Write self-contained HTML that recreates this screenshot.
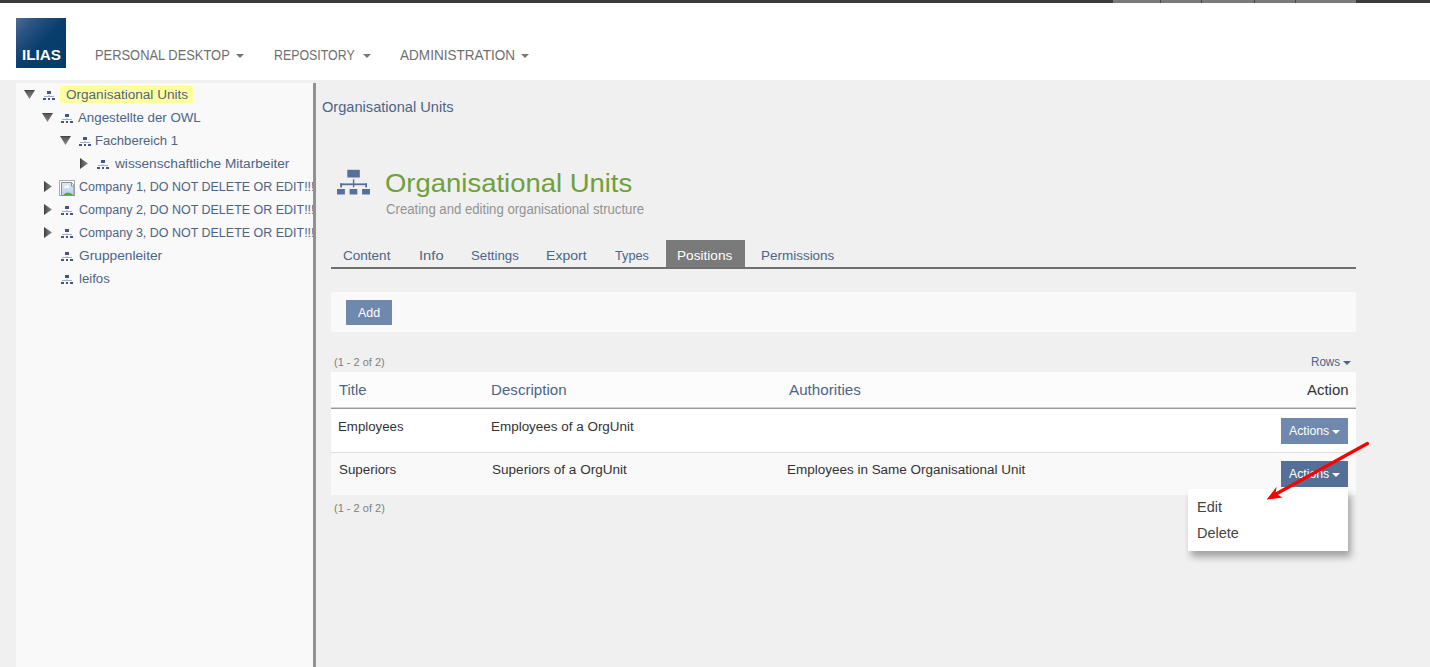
<!DOCTYPE html>
<html><head><meta charset="utf-8">
<style>
*{box-sizing:border-box;margin:0;padding:0}
html,body{width:1430px;height:667px;overflow:hidden;background:#f0f0f0;font-family:"Liberation Sans",sans-serif;position:relative}
.abs{position:absolute}
.tx{position:absolute;white-space:nowrap;transform-origin:0 0}
.caret{position:absolute;width:0;height:0;border-left:4px solid transparent;border-right:4px solid transparent;border-top:4px solid #777}
</style></head><body>
<div class="abs" style="left:0;top:0;width:1430px;height:3px;background:#3c3c3c"></div>
<div class="abs" style="left:1113px;top:0;width:243px;height:3px;background:#7a7a7a"></div>
<div class="abs" style="left:1160px;top:0;width:1px;height:3px;background:#444"></div>
<div class="abs" style="left:1201px;top:0;width:1px;height:3px;background:#444"></div>
<div class="abs" style="left:1254px;top:0;width:1px;height:3px;background:#444"></div>
<div class="abs" style="left:1295px;top:0;width:1px;height:3px;background:#444"></div>
<div class="abs" style="left:0;top:3px;width:1430px;height:77px;background:#fff"></div>
<div class="abs" style="left:16px;top:18px;width:50px;height:50px;background:linear-gradient(135deg,#4d6d93 0%,#2a5280 22%,#0a3f6d 50%,#033a68 100%)"></div>
<div class="caret" style="left:236px;top:54px;border-top-color:#777"></div>
<div class="caret" style="left:362.5px;top:54px;border-top-color:#777"></div>
<div class="caret" style="left:521px;top:54px;border-top-color:#777"></div>

<div class="abs" style="left:16px;top:83px;width:297px;height:584px;background:#f9f9f9"></div>
<div class="abs" style="left:313px;top:83px;width:3px;height:584px;background:#919191"></div>
<div class="abs" style="left:60px;top:86px;width:133px;height:17px;background:#ffff9e"></div>
<svg class="abs" style="left:24px;top:90px" width="11" height="9" viewBox="0 0 11 9"><defs><linearGradient id="gd24" x1="0" y1="0" x2="0" y2="1"><stop offset="0" stop-color="#3a3a3a"/><stop offset="0.15" stop-color="#5a5a5a"/><stop offset="1" stop-color="#8a8a8a"/></linearGradient></defs><path d="M0 0H11L5.5 9Z" fill="url(#gd24)"/></svg>
<svg class="abs" style="left:43px;top:91px" width="12" height="9" viewBox="0 0 12 9" shape-rendering="crispEdges"><rect x="4" y="0" width="4" height="3" fill="#41568a"/><rect x="1" y="5" width="10" height="1" fill="#a3adc6"/><rect x="5" y="4" width="2" height="1" fill="#d0d5e2"/><rect x="0" y="7" width="3" height="2" fill="#41568a"/><rect x="5" y="7" width="2" height="2" fill="#41568a"/><rect x="9" y="7" width="3" height="2" fill="#41568a"/></svg>
<svg class="abs" style="left:42px;top:113px" width="11" height="9" viewBox="0 0 11 9"><defs><linearGradient id="gd42" x1="0" y1="0" x2="0" y2="1"><stop offset="0" stop-color="#3a3a3a"/><stop offset="0.15" stop-color="#5a5a5a"/><stop offset="1" stop-color="#8a8a8a"/></linearGradient></defs><path d="M0 0H11L5.5 9Z" fill="url(#gd42)"/></svg>
<svg class="abs" style="left:61px;top:114px" width="12" height="9" viewBox="0 0 12 9" shape-rendering="crispEdges"><rect x="4" y="0" width="4" height="3" fill="#41568a"/><rect x="1" y="5" width="10" height="1" fill="#a3adc6"/><rect x="5" y="4" width="2" height="1" fill="#d0d5e2"/><rect x="0" y="7" width="3" height="2" fill="#41568a"/><rect x="5" y="7" width="2" height="2" fill="#41568a"/><rect x="9" y="7" width="3" height="2" fill="#41568a"/></svg>
<svg class="abs" style="left:60px;top:136px" width="11" height="9" viewBox="0 0 11 9"><defs><linearGradient id="gd60" x1="0" y1="0" x2="0" y2="1"><stop offset="0" stop-color="#3a3a3a"/><stop offset="0.15" stop-color="#5a5a5a"/><stop offset="1" stop-color="#8a8a8a"/></linearGradient></defs><path d="M0 0H11L5.5 9Z" fill="url(#gd60)"/></svg>
<svg class="abs" style="left:79px;top:137px" width="12" height="9" viewBox="0 0 12 9" shape-rendering="crispEdges"><rect x="4" y="0" width="4" height="3" fill="#41568a"/><rect x="1" y="5" width="10" height="1" fill="#a3adc6"/><rect x="5" y="4" width="2" height="1" fill="#d0d5e2"/><rect x="0" y="7" width="3" height="2" fill="#41568a"/><rect x="5" y="7" width="2" height="2" fill="#41568a"/><rect x="9" y="7" width="3" height="2" fill="#41568a"/></svg>
<svg class="abs" style="left:80px;top:158px" width="8" height="11" viewBox="0 0 8 11"><defs><linearGradient id="gr80158" x1="0" y1="0" x2="1" y2="0"><stop offset="0" stop-color="#3a3a3a"/><stop offset="0.2" stop-color="#555"/><stop offset="1" stop-color="#8a8a8a"/></linearGradient></defs><path d="M0 0V11L8 5.5Z" fill="url(#gr80158)"/></svg>
<svg class="abs" style="left:97px;top:160px" width="12" height="9" viewBox="0 0 12 9" shape-rendering="crispEdges"><rect x="4" y="0" width="4" height="3" fill="#41568a"/><rect x="1" y="5" width="10" height="1" fill="#a3adc6"/><rect x="5" y="4" width="2" height="1" fill="#d0d5e2"/><rect x="0" y="7" width="3" height="2" fill="#41568a"/><rect x="5" y="7" width="2" height="2" fill="#41568a"/><rect x="9" y="7" width="3" height="2" fill="#41568a"/></svg>
<svg class="abs" style="left:44px;top:181px" width="8" height="11" viewBox="0 0 8 11"><defs><linearGradient id="gr44181" x1="0" y1="0" x2="1" y2="0"><stop offset="0" stop-color="#3a3a3a"/><stop offset="0.2" stop-color="#555"/><stop offset="1" stop-color="#8a8a8a"/></linearGradient></defs><path d="M0 0V11L8 5.5Z" fill="url(#gr44181)"/></svg>
<svg class="abs" style="left:59px;top:180px" width="16" height="16" viewBox="0 0 16 16"><defs><linearGradient id="sky" x1="0" y1="0" x2="0" y2="1"><stop offset="0" stop-color="#dfe9f8"/><stop offset="1" stop-color="#b9cdeb"/></linearGradient></defs><rect x="0.5" y="0.5" width="15" height="15" fill="#fff" stroke="#ababab"/><path d="M2.5 15.5V2.5H12.5L15 5V15.5Z" fill="url(#sky)" stroke="#8d8d8d"/><path d="M12.5 2.5V6H15.2" fill="#fff" stroke="#8d8d8d"/><path d="M4.5 7.8Q5 6 6.8 6.2Q7.6 4.6 9 5.6Q10.6 6 10.2 7.8Z" fill="#fff"/><path d="M4.5 15Q8 10.5 13.5 14.3V15Z" fill="#4caf35"/></svg>
<svg class="abs" style="left:44px;top:204px" width="8" height="11" viewBox="0 0 8 11"><defs><linearGradient id="gr44204" x1="0" y1="0" x2="1" y2="0"><stop offset="0" stop-color="#3a3a3a"/><stop offset="0.2" stop-color="#555"/><stop offset="1" stop-color="#8a8a8a"/></linearGradient></defs><path d="M0 0V11L8 5.5Z" fill="url(#gr44204)"/></svg>
<svg class="abs" style="left:61px;top:206px" width="12" height="9" viewBox="0 0 12 9" shape-rendering="crispEdges"><rect x="4" y="0" width="4" height="3" fill="#41568a"/><rect x="1" y="5" width="10" height="1" fill="#a3adc6"/><rect x="5" y="4" width="2" height="1" fill="#d0d5e2"/><rect x="0" y="7" width="3" height="2" fill="#41568a"/><rect x="5" y="7" width="2" height="2" fill="#41568a"/><rect x="9" y="7" width="3" height="2" fill="#41568a"/></svg>
<svg class="abs" style="left:44px;top:227px" width="8" height="11" viewBox="0 0 8 11"><defs><linearGradient id="gr44227" x1="0" y1="0" x2="1" y2="0"><stop offset="0" stop-color="#3a3a3a"/><stop offset="0.2" stop-color="#555"/><stop offset="1" stop-color="#8a8a8a"/></linearGradient></defs><path d="M0 0V11L8 5.5Z" fill="url(#gr44227)"/></svg>
<svg class="abs" style="left:61px;top:229px" width="12" height="9" viewBox="0 0 12 9" shape-rendering="crispEdges"><rect x="4" y="0" width="4" height="3" fill="#41568a"/><rect x="1" y="5" width="10" height="1" fill="#a3adc6"/><rect x="5" y="4" width="2" height="1" fill="#d0d5e2"/><rect x="0" y="7" width="3" height="2" fill="#41568a"/><rect x="5" y="7" width="2" height="2" fill="#41568a"/><rect x="9" y="7" width="3" height="2" fill="#41568a"/></svg>
<svg class="abs" style="left:61px;top:252px" width="12" height="9" viewBox="0 0 12 9" shape-rendering="crispEdges"><rect x="4" y="0" width="4" height="3" fill="#41568a"/><rect x="1" y="5" width="10" height="1" fill="#a3adc6"/><rect x="5" y="4" width="2" height="1" fill="#d0d5e2"/><rect x="0" y="7" width="3" height="2" fill="#41568a"/><rect x="5" y="7" width="2" height="2" fill="#41568a"/><rect x="9" y="7" width="3" height="2" fill="#41568a"/></svg>
<svg class="abs" style="left:61px;top:275px" width="12" height="9" viewBox="0 0 12 9" shape-rendering="crispEdges"><rect x="4" y="0" width="4" height="3" fill="#41568a"/><rect x="1" y="5" width="10" height="1" fill="#a3adc6"/><rect x="5" y="4" width="2" height="1" fill="#d0d5e2"/><rect x="0" y="7" width="3" height="2" fill="#41568a"/><rect x="5" y="7" width="2" height="2" fill="#41568a"/><rect x="9" y="7" width="3" height="2" fill="#41568a"/></svg>
<div class="abs" style="left:0;top:0;width:313px;height:667px;overflow:hidden">
<div class="tx" id="t1" style="left:65.60px;top:88.00px;font-size:13.23px;line-height:13.23px;color:#4c6586;font-weight:normal;transform:scaleX(1.0250);">Organisational Units</div>
<div class="tx" id="t2" style="left:78.20px;top:111.01px;font-size:13.23px;line-height:13.23px;color:#4c6586;font-weight:normal;transform:scaleX(1.0065);">Angestellte der OWL</div>
<div class="tx" id="t3" style="left:95.41px;top:134.01px;font-size:13.23px;line-height:13.23px;color:#4c6586;font-weight:normal;transform:scaleX(0.9901);">Fachbereich 1</div>
<div class="tx" id="t4" style="left:115.23px;top:157.01px;font-size:13.23px;line-height:13.23px;color:#4c6586;font-weight:normal;transform:scaleX(1.0318);">wissenschaftliche Mitarbeiter</div>
<div class="tx" id="t5" style="left:78.70px;top:180.01px;font-size:13.23px;line-height:13.23px;color:#4c6586;font-weight:normal;transform:scaleX(0.9441);">Company 1, DO NOT DELETE OR EDIT!!!</div>
<div class="tx" id="t6" style="left:78.70px;top:203.01px;font-size:13.23px;line-height:13.23px;color:#4c6586;font-weight:normal;transform:scaleX(0.9441);">Company 2, DO NOT DELETE OR EDIT!!!</div>
<div class="tx" id="t7" style="left:78.70px;top:226.01px;font-size:13.23px;line-height:13.23px;color:#4c6586;font-weight:normal;transform:scaleX(0.9441);">Company 3, DO NOT DELETE OR EDIT!!!</div>
<div class="tx" id="t8" style="left:78.60px;top:249.01px;font-size:13.23px;line-height:13.23px;color:#4c6586;font-weight:normal;transform:scaleX(1.0385);">Gruppenleiter</div>
<div class="tx" id="t9" style="left:78.60px;top:272.01px;font-size:13.23px;line-height:13.23px;color:#4c6586;font-weight:normal;transform:scaleX(0.9984);">leifos</div>
</div>

<svg class="abs" style="left:337px;top:169px" width="33" height="25.50" viewBox="0 0 33 25.5"><g fill="#56709a"><rect x="10.3" y="0.8" width="12.5" height="7.7"/><rect x="15.9" y="10.3" width="1.4" height="8.1"/><rect x="3.2" y="14.4" width="26.7" height="1.8"/><rect x="3.2" y="14.4" width="1.8" height="4"/><rect x="28.2" y="14.4" width="1.8" height="4"/><rect x="0" y="20" width="7.9" height="5.5"/><rect x="12.6" y="20" width="7.7" height="5.5"/><rect x="25.1" y="20" width="7.9" height="5.5"/></g></svg>

<div class="abs" style="left:666px;top:240px;width:79px;height:27px;background:#7a7a7a"></div>
<div class="abs" style="left:331px;top:267px;width:1025px;height:2px;background:#6f6f6f"></div>

<div class="abs" style="left:331px;top:292px;width:1025px;height:40px;background:#f9f9f9"></div>
<div class="abs" style="left:346px;top:300px;width:46px;height:25px;background:#6f88ad"></div>

<div class="caret" style="left:1343px;top:361px;border-top-color:#4c6586"></div>
<div class="abs" style="left:331px;top:372px;width:1025px;height:35px;background:#fcfcfc"></div>
<div class="abs" style="left:331px;top:407px;width:1025px;height:1px;background:#d0d0d0"></div><div class="abs" style="left:331px;top:408px;width:1025px;height:1px;background:#999"></div>
<div class="abs" style="left:331px;top:409px;width:1025px;height:43px;background:#fff"></div>
<div class="abs" style="left:331px;top:452px;width:1025px;height:1px;background:#dedede"></div>
<div class="abs" style="left:331px;top:453px;width:1025px;height:42px;background:#f9f9f9"></div>

<div class="abs" style="left:1281px;top:418px;width:67px;height:26px;background:#6f88ad"></div>
<div class="caret" style="left:1332px;top:430px;border-top-color:#fff"></div>
<div class="abs" style="left:1281px;top:461px;width:67px;height:26px;background:#557096"></div>
<div class="caret" style="left:1332px;top:473px;border-top-color:#fff"></div>

<div class="abs" style="left:1188px;top:489px;width:160px;height:62px;background:#fff;box-shadow:3px 6px 7px rgba(0,0,0,0.32)"></div>

<div class="tx" id="logo" style="left:21.61px;top:47.01px;font-size:15.41px;line-height:15.41px;color:#fff;font-weight:bold;transform:scaleX(0.9903);">ILIAS</div>
<div class="tx" id="nav1" style="left:95.41px;top:48.01px;font-size:14.54px;line-height:14.54px;color:#6f6f6f;font-weight:normal;transform:scaleX(0.8876);">PERSONAL DESKTOP</div>
<div class="tx" id="nav2" style="left:273.65px;top:48.01px;font-size:14.54px;line-height:14.54px;color:#6f6f6f;font-weight:normal;transform:scaleX(0.8514);">REPOSITORY</div>
<div class="tx" id="nav3" style="left:400.00px;top:48.01px;font-size:14.54px;line-height:14.54px;color:#6f6f6f;font-weight:normal;transform:scaleX(0.9337);">ADMINISTRATION</div>
<div class="tx" id="bc" style="left:322.00px;top:99.00px;font-size:15.12px;line-height:15.12px;color:#4c6586;font-weight:normal;transform:scaleX(0.9671);">Organisational Units</div>
<div class="tx" id="title" style="left:385.23px;top:171.00px;font-size:25.58px;line-height:25.58px;color:#6ea03c;font-weight:normal;transform:scaleX(1.0734);">Organisational Units</div>
<div class="tx" id="sub" style="left:385.90px;top:203.01px;font-size:13.81px;line-height:13.81px;color:#939393;font-weight:normal;transform:scaleX(0.9533);">Creating and editing organisational structure</div>
<div class="tx" id="tab1" style="left:343.00px;top:249.01px;font-size:13.52px;line-height:13.52px;color:#4c6586;font-weight:normal;transform:scaleX(1.0014);">Content</div>
<div class="tx" id="tab2" style="left:418.51px;top:249.01px;font-size:13.52px;line-height:13.52px;color:#4c6586;font-weight:normal;transform:scaleX(1.0900);">Info</div>
<div class="tx" id="tab3" style="left:470.90px;top:249.01px;font-size:13.52px;line-height:13.52px;color:#4c6586;font-weight:normal;transform:scaleX(0.9790);">Settings</div>
<div class="tx" id="tab4" style="left:546.16px;top:249.01px;font-size:13.52px;line-height:13.52px;color:#4c6586;font-weight:normal;transform:scaleX(1.0401);">Export</div>
<div class="tx" id="tab5" style="left:615.30px;top:249.01px;font-size:13.52px;line-height:13.52px;color:#4c6586;font-weight:normal;transform:scaleX(0.9375);">Types</div>
<div class="tx" id="tab6" style="left:677.29px;top:249.01px;font-size:13.52px;line-height:13.52px;color:#fff;font-weight:normal;transform:scaleX(1.0087);">Positions</div>
<div class="tx" id="tab7" style="left:760.50px;top:249.01px;font-size:13.52px;line-height:13.52px;color:#4c6586;font-weight:normal;transform:scaleX(0.9963);">Permissions</div>
<div class="tx" id="add" style="left:357.60px;top:306.00px;font-size:13.08px;line-height:13.08px;color:#fff;font-weight:normal;transform:scaleX(0.9480);">Add</div>
<div class="tx" id="cnt1" style="left:333.70px;top:356.01px;font-size:11.63px;line-height:11.63px;color:#808080;font-weight:normal;transform:scaleX(0.9444);">(1 - 2 of 2)</div>
<div class="tx" id="rows" style="left:1311.05px;top:356.00px;font-size:12.21px;line-height:12.21px;color:#4c6586;font-weight:normal;transform:scaleX(0.9530);">Rows</div>
<div class="tx" id="h1" style="left:338.70px;top:383.00px;font-size:14.97px;line-height:14.97px;color:#4c6586;font-weight:normal;transform:scaleX(0.9891);">Title</div>
<div class="tx" id="h2" style="left:490.89px;top:383.00px;font-size:14.97px;line-height:14.97px;color:#4c6586;font-weight:normal;transform:scaleX(1.0102);">Description</div>
<div class="tx" id="h3" style="left:788.50px;top:383.00px;font-size:14.97px;line-height:14.97px;color:#4c6586;font-weight:normal;transform:scaleX(1.0166);">Authorities</div>
<div class="tx" id="h4" style="left:1306.70px;top:383.01px;font-size:14.10px;line-height:14.10px;color:#333;font-weight:normal;transform:scaleX(1.0601);">Action</div>
<div class="tx" id="r1c1" style="left:337.79px;top:420.01px;font-size:13.08px;line-height:13.08px;color:#333;font-weight:normal;transform:scaleX(1.0132);">Employees</div>
<div class="tx" id="r1c2" style="left:490.67px;top:420.01px;font-size:13.08px;line-height:13.08px;color:#333;font-weight:normal;transform:scaleX(1.0282);">Employees of a OrgUnit</div>
<div class="tx" id="r2c1" style="left:338.80px;top:463.00px;font-size:13.08px;line-height:13.08px;color:#333;font-weight:normal;transform:scaleX(1.0225);">Superiors</div>
<div class="tx" id="r2c2" style="left:491.70px;top:463.00px;font-size:13.08px;line-height:13.08px;color:#333;font-weight:normal;transform:scaleX(1.0362);">Superiors of a OrgUnit</div>
<div class="tx" id="r2c3" style="left:787.47px;top:463.00px;font-size:13.08px;line-height:13.08px;color:#333;font-weight:normal;transform:scaleX(1.0303);">Employees in Same Organisational Unit</div>
<div class="tx" id="act1" style="left:1288.90px;top:424.01px;font-size:13.23px;line-height:13.23px;color:#fff;font-weight:normal;transform:scaleX(0.9260);">Actions</div>
<div class="tx" id="act2" style="left:1288.90px;top:467.01px;font-size:13.23px;line-height:13.23px;color:#fff;font-weight:normal;transform:scaleX(0.9260);">Actions</div>
<div class="tx" id="cnt2" style="left:333.60px;top:502.00px;font-size:11.63px;line-height:11.63px;color:#808080;font-weight:normal;transform:scaleX(0.9481);">(1 - 2 of 2)</div>
<div class="tx" id="edit" style="left:1197.29px;top:500.01px;font-size:14.39px;line-height:14.39px;color:#444;font-weight:normal;transform:scaleX(1.0052);">Edit</div>
<div class="tx" id="del" style="left:1197.29px;top:526.01px;font-size:14.39px;line-height:14.39px;color:#444;font-weight:normal;transform:scaleX(1.0084);">Delete</div>

<svg class="abs" style="left:0;top:0" width="1430" height="667" viewBox="0 0 1430 667">
<line x1="1367.4" y1="443.5" x2="1276" y2="494" stroke="#f00" stroke-width="3.3" stroke-linecap="round"/>
<path d="M1266.6 499.6L1276.6 486.8L1275.5 493.5L1282.4 497.6Z" fill="#f00"/>
</svg>
</body></html>
